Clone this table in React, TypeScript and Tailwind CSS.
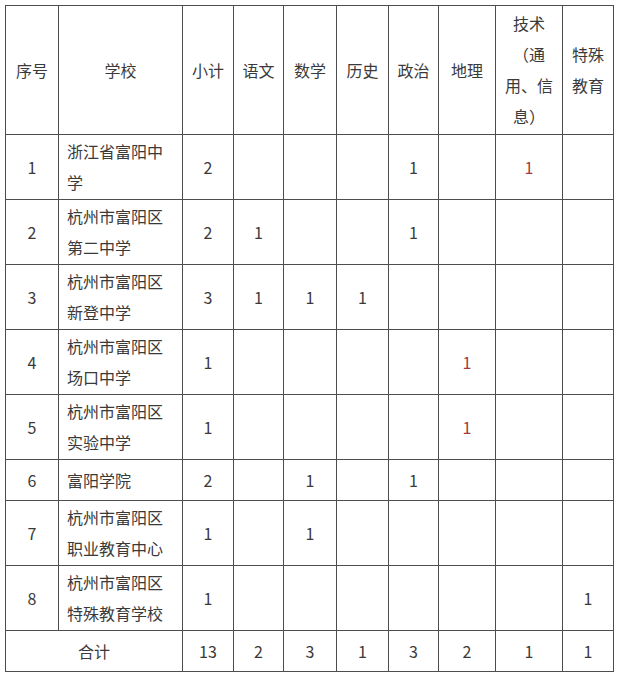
import React from "react";

type Row = {
  no: string;
  school: string;
  total: string;
  cells: string[]; // 语文 数学 历史 政治 地理 技术 特殊教育
  red?: number[];
  tall?: boolean;
};

const rows: Row[] = [
  { no: "1", school: "浙江省富阳中学", total: "2", cells: ["", "", "", "1", "", "1", ""], red: [5], tall: true },
  { no: "2", school: "杭州市富阳区第二中学", total: "2", cells: ["1", "", "", "1", "", "", ""], tall: true },
  { no: "3", school: "杭州市富阳区新登中学", total: "3", cells: ["1", "1", "1", "", "", "", ""], tall: true },
  { no: "4", school: "杭州市富阳区场口中学", total: "1", cells: ["", "", "", "", "1", "", ""], red: [4], tall: true },
  { no: "5", school: "杭州市富阳区实验中学", total: "1", cells: ["", "", "", "", "1", "", ""], red: [4], tall: true },
  { no: "6", school: "富阳学院", total: "2", cells: ["", "1", "", "1", "", "", ""] },
  { no: "7", school: "杭州市富阳区职业教育中心", total: "1", cells: ["", "1", "", "", "", "", ""], tall: true },
  { no: "8", school: "杭州市富阳区特殊教育学校", total: "1", cells: ["", "", "", "", "", "", "1"], tall: true },
];

// widths measured line to line; last column also carries the right border
const widths = [53, 124, 51, 50, 53, 52, 50, 57, 67, 52];

const cell = "border-l border-t border-[#4d4d4d] align-middle text-center p-0";

export default function App() {
  return (
    <div
      className="bg-white min-h-[679px] p-[5px] text-[16px] text-[#3a3a3a]"
      style={{ fontFamily: '"Noto Sans CJK SC", "Noto Sans", sans-serif' }}
    >
      <table className="table-fixed border-separate border-spacing-0 w-[609px]">
        <colgroup>
          {widths.map((w, i) => (
            <col key={i} style={{ width: w }} />
          ))}
        </colgroup>
        <thead>
          <tr>
            <th className={`${cell} h-[129px] font-normal`}>序号</th>
            <th className={`${cell} font-normal`}>学校</th>
            <th className={`${cell} font-normal`}>小计</th>
            <th className={`${cell} font-normal`}>语文</th>
            <th className={`${cell} font-normal`}>数学</th>
            <th className={`${cell} font-normal`}>历史</th>
            <th className={`${cell} font-normal`}>政治</th>
            <th className={`${cell} font-normal`}>地理</th>
            <th className={`${cell} font-normal leading-[31px]`}>
              技术
              <br />
              （通
              <br />
              用、信
              <br />
              息）
            </th>
            <th className={`${cell} border-r font-normal leading-[31px]`}>
              特殊
              <br />
              教育
            </th>
          </tr>
        </thead>
        <tbody>
          {rows.map((r) => (
            <tr key={r.no}>
              <td className={`${cell} ${r.tall ? "h-[65px]" : "h-[41px]"}`}>{r.no}</td>
              <td className={`${cell} text-left px-2 leading-[31px]`}>{r.school}</td>
              <td className={cell}>{r.total}</td>
              {r.cells.map((c, i) => (
                <td
                  key={i}
                  className={`${cell} ${i === 6 ? "border-r" : ""} ${
                    r.red?.includes(i) ? "text-[#a8383c]" : ""
                  }`}
                >
                  {c}
                </td>
              ))}
            </tr>
          ))}
          <tr>
            <td colSpan={2} className={`${cell} border-b h-[42px]`}>
              合计
            </td>
            {["13", "2", "3", "1", "3", "2", "1", "1"].map((v, i) => (
              <td key={i} className={`${cell} border-b ${i === 7 ? "border-r" : ""}`}>
                {v}
              </td>
            ))}
          </tr>
        </tbody>
      </table>
    </div>
  );
}
